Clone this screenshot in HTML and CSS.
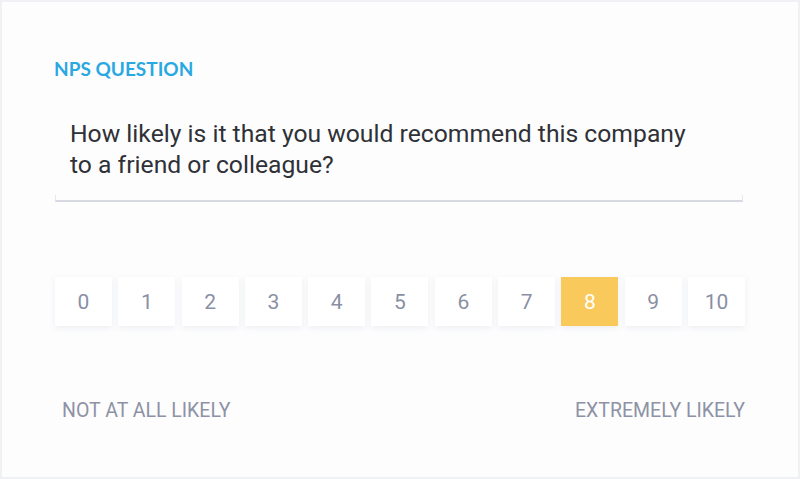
FILE: index.html
```html
<!DOCTYPE html>
<html lang="en">
<head>
  <meta charset="UTF-8">
  <title>NPS Question</title>
  <link rel="stylesheet" href="styles.css">
</head>
<body>
  <div class="card">
    <div class="label">NPS QUESTION</div>
    <div class="question">
      <p>How likely is it that you would recommend this company<br>to a friend or colleague?</p>
    </div>
    <div class="rule"></div>
    <ul class="scale">
      <li>0</li>
      <li>1</li>
      <li>2</li>
      <li>3</li>
      <li>4</li>
      <li>5</li>
      <li>6</li>
      <li>7</li>
      <li class="selected">8</li>
      <li>9</li>
      <li>10</li>
    </ul>
    <div class="legend">
      <span>NOT AT ALL LIKELY</span>
      <span>EXTREMELY LIKELY</span>
    </div>
  </div>
</body>
</html>
```
FILE: styles.css
```css
body { margin: 0; background: #fff; font-family: Roboto, "Liberation Sans", sans-serif; }
.card {
  width: 800px;
  height: 479px;
  box-sizing: border-box;
  border: 2px solid #f0f1f4;
  background: #fdfdfe;
  padding: 57px 53px 0 52px;
}
.label {
  font-family: Lato, sans-serif;
  font-weight: 700;
  font-size: 19px;
  line-height: 20px;
  color: #2aa8e2;
}
.question {
  margin-top: 39px;
  padding: 0 0 15px 16px;
}
.question p {
  margin: 0;
  font-size: 24.7px;
  line-height: 31px;
  color: #2f3136;
}
.rule {
  height: 5px;
  margin: 0 2px 0 1px;
  border-bottom: 2px solid #d6d9e0;
  border-left: 1px solid #e6e8ed;
  border-right: 1px solid #e6e8ed;
}
ul { list-style-type: none; padding: 0; margin: 75px 0 0 1px; }
.scale { display: flex; gap: 6.3px; }
.scale li {
  width: 57px;
  height: 49px;
  display: flex;
  align-items: center;
  justify-content: center;
  background: #fff;
  box-shadow: 0 2px 6px rgba(120, 130, 160, 0.12);
  color: #8a8fa4;
  font-size: 21px;
}
.scale li.selected { background: #f9c95c; color: #fff; }
.legend {
  display: flex;
  justify-content: space-between;
  margin: 73px 0 0 8px;
  font-size: 19.5px;
  line-height: 24px;
  color: #8d92a5;
}
```
